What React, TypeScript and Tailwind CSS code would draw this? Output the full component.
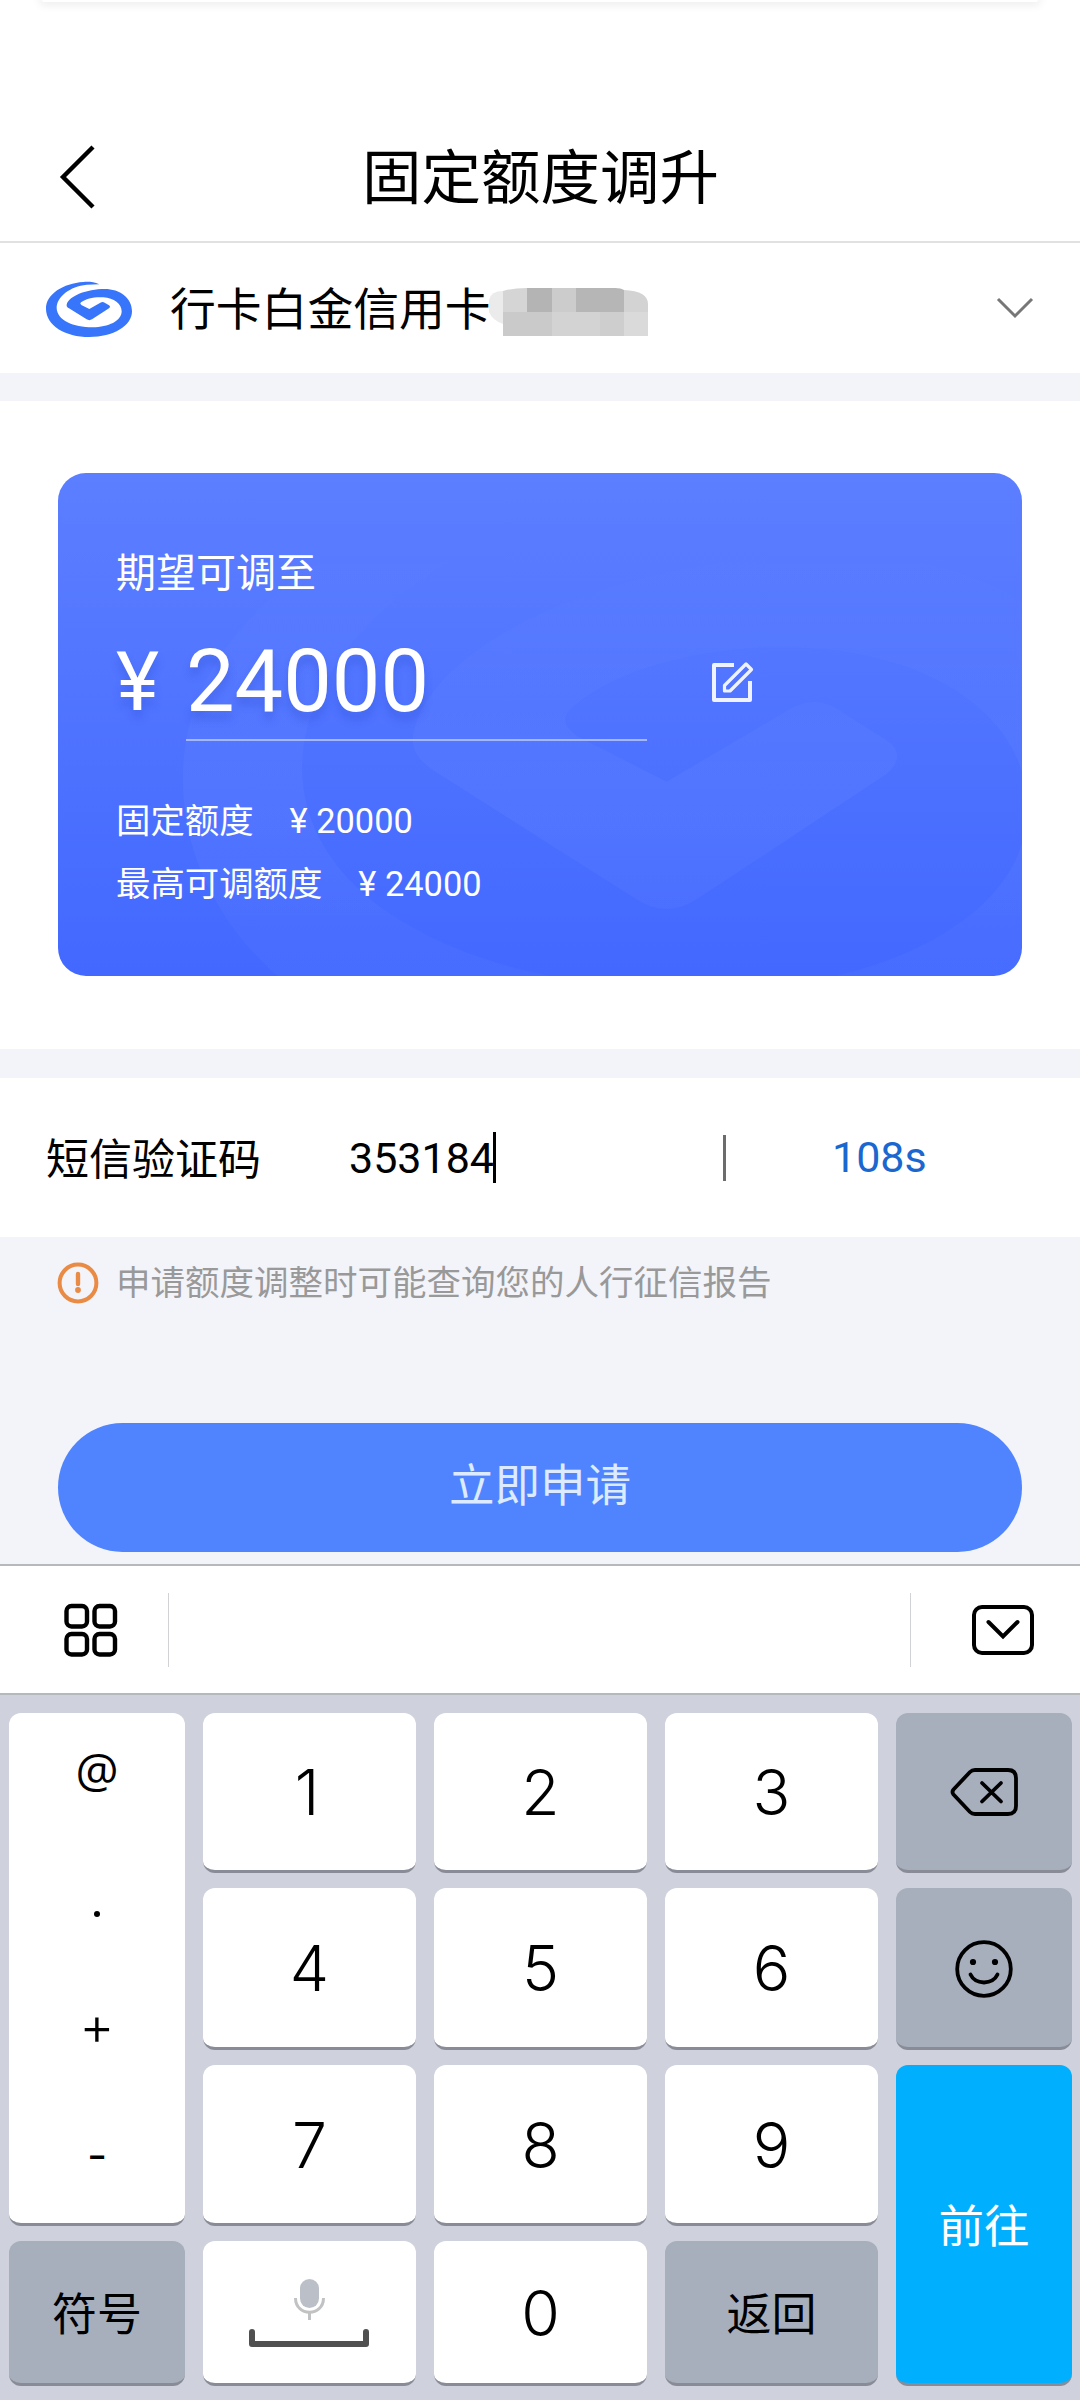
import React, { useState } from 'react';

const swirl =
  'M178 37 C160 29 145 29 130 30 C70 34 18 66 18 110 C18 160 75 195 148 195 C220 195 276 162 276 118 C276 78 240 51 194 51 C140 51 86 72 80 98 C79 103 82 106 87 109 L140 142 Q148 147 156 142 L207 109 Q213 104 207 100 L194 92 Q188 88 181 92 L148 111 L124 99 Q118 95 123 91 C138 79 165 74 190 76 C222 79 245 95 245 118 C245 147 205 166 158 166 C100 166 51 145 50 108 C50 74 90 43 140 38 Z';

const BankLogo = () => (
  <svg className="w-[100px] h-[75px]" viewBox="0 0 300 225">
    <path d={swirl} fill="#3775fb" />
  </svg>
);

const CardWatermark = () => (
  <svg className="absolute inset-0 w-full h-full" viewBox="0 0 964 503">
    <defs>
      <linearGradient id="fade" x1="0" y1="0" x2="0" y2="1">
        <stop offset="0.1" stopColor="#fff" stopOpacity="0" />
        <stop offset="0.55" stopColor="#fff" stopOpacity="0.04" />
        <stop offset="1" stopColor="#fff" stopOpacity="0.01" />
      </linearGradient>
    </defs>
    <path d={swirl} fill="url(#fade)" transform="translate(58 -113) scale(3.72 3.8)" />
  </svg>
);

const Mosaic = () => (
  <svg className="w-[164px] h-[60px]" viewBox="0 0 164 60">
    <path d="M0 22 Q2 13 14 13 V46 Q3 42 0 34 Z" fill="#ebebeb" />
    <path d="M14 34 V13 Q24 10 38 10 V34 Z" fill="#d5d5d5" />
    <rect x="38" y="10" width="25" height="24" fill="#b4b4b4" />
    <rect x="63" y="10" width="24" height="24" fill="#cccccc" />
    <path d="M87 10 H126 Q132 10 135 12 V34 H87 Z" fill="#b6b6b6" />
    <path d="M135 12 Q159 13 159 26 V34 H135 Z" fill="#d3d3d3" />
    <rect x="14" y="34" width="49" height="24" fill="#cacaca" />
    <rect x="63" y="34" width="48" height="24" fill="#d3d3d3" />
    <rect x="111" y="34" width="24" height="24" fill="#cecece" />
    <rect x="135" y="34" width="24" height="24" fill="#dadada" />
  </svg>
);

const Header = () => (
  <div className="h-[243px] border-b-2 border-[#e1e1e1] bg-white">
    <div className="h-[2px] mx-[42px] rounded-b-lg bg-white shadow-[0_0_8px_3px_#ececec]" />
    <div className="mt-[102px] h-[146px] flex items-center">
      <svg className="ml-[56px] w-[44px] h-[68px]" viewBox="0 0 44 68">
        <path d="M37 4 L7 34 L37 64" fill="none" stroke="#000" strokeWidth="4.4" />
      </svg>
      <div className="flex-1 text-center pt-[4px] pr-[99px] text-[59.5px] leading-[70px]">固定额度调升</div>
    </div>
  </div>
);

const CardSelect = () => (
  <div className="h-[130px] flex items-center bg-white">
    <div className="ml-[40px] pt-[2px]">
      <BankLogo />
    </div>
    <span className="ml-[30px] pt-[7px] text-[45.8px] w-[319px] whitespace-nowrap">行卡白金信用卡</span>
    <Mosaic />
    <svg className="ml-auto mr-[44px] w-[42px] h-[28px]" viewBox="0 0 42 28">
      <path d="M4 5 L21 22 L38 5" fill="none" stroke="#777" strokeWidth="3" />
    </svg>
  </div>
);

const LimitCard = () => (
  <div className="relative h-[503px] rounded-[28px] overflow-hidden bg-linear-to-b from-[#5c7eff] to-[#4268ff] text-white px-[58px]">
    <CardWatermark />
    <div className="relative">
      <div className="pt-[72px] text-[40px] leading-[58px]">期望可调至</div>
      <div className="flex items-center h-[100px] mt-[29px] [text-shadow:0_8px_9px_rgba(40,70,200,0.3)]">
        <span className="w-[70px] text-[82px] leading-[100px]">¥</span>
        <span className="w-[461px] text-[86.5px] leading-[100px]">24000</span>
        <svg className="ml-[63px] w-[44px] h-[44px]" viewBox="0 0 44 44" fill="none" stroke="#eef3ff" strokeWidth="4" strokeLinejoin="round">
          <path d="M24 5 H4 V40 H40 V21" />
          <path d="M36 4 L41.5 9.5 L20 31 H14.5 V25.5 Z" strokeWidth="3.2" />
        </svg>
      </div>
      <div className="ml-[70px] mt-[7px] w-[461px] h-[2px] bg-[#a5b8ff]" />
      <div className="mt-[49px] text-[34.4px] leading-[63px] flex gap-[36px]">
        <span>固定额度</span>
        <span>¥ 20000</span>
      </div>
      <div className="text-[34.4px] leading-[63px] flex gap-[36px]">
        <span>最高可调额度</span>
        <span>¥ 24000</span>
      </div>
    </div>
  </div>
);

const SmsCode = () => {
  const [code] = useState('353184');

  return (
    <div className="h-[159px] flex items-center bg-white">
      <span className="ml-[46px] pt-[6px] w-[303px] text-[43px]">短信验证码</span>
      <span className="pt-[2px] text-[43px] w-[144px]">{code}</span>
      <span className="w-[3px] h-[51px] bg-black" />
      <span className="ml-[227px] w-[3px] h-[46px] bg-[#6c6c6c]" />
      <span className="ml-[106px] text-[43px] text-[#1967cf]">108s</span>
    </div>
  );
};

const Notice = () => (
  <div className="mt-[25px] h-[42px] flex items-center">
    <svg className="ml-[57px] w-[42px] h-[42px]" viewBox="0 0 42 42">
      <circle cx="21" cy="21" r="18.4" fill="none" stroke="#e98a45" strokeWidth="4" />
      <path d="M21 12 V22" stroke="#e98a45" strokeWidth="4.4" strokeLinecap="round" />
      <circle cx="21" cy="28" r="2.9" fill="#e98a45" />
    </svg>
    <span className="ml-[17px] text-[34.5px] leading-[42px] text-[#999]">申请额度调整时可能查询您的人行征信报告</span>
  </div>
);

const Toolbar = () => (
  <div className="h-[131px] flex items-center bg-white border-y-2 border-[#b6b9bc]">
    <svg className="ml-[63px] mt-[3px] w-[56px] h-[56px]" viewBox="0 0 56 56" fill="none" stroke="#000" strokeWidth="4.4">
      <rect x="3.5" y="3" width="20.5" height="20.5" rx="5" />
      <rect x="31.5" y="3" width="20.5" height="20.5" rx="5" />
      <rect x="3.5" y="31" width="20.5" height="20.5" rx="5" />
      <rect x="31.5" y="31" width="20.5" height="20.5" rx="5" />
    </svg>
    <div className="ml-[49px] w-px h-[74px] bg-[#d0d2d5]" />
    <div className="ml-[741px] w-px h-[74px] bg-[#d0d2d5]" />
    <svg className="ml-[60px] w-[64px] h-[52px]" viewBox="0 0 64 52" fill="none" stroke="#000" strokeWidth="4">
      <rect x="3" y="3" width="58" height="46" rx="8" />
      <path d="M17.5 18 L32 32.5 L46.5 18" strokeLinecap="round" />
    </svg>
  </div>
);

type KeyProps = {
  className?: string;
  children: React.ReactNode;
};

const Key = ({ className = 'bg-white', children }: KeyProps) => (
  <button className={`flex items-center justify-center rounded-[12px] border-b-[3px] border-[#898c97] ${className}`}>
    {children}
  </button>
);

const Digit = ({ value }: { value: string }) => (
  <Key>
    <span className="pt-[2px] font-['Inter'] font-[350] text-[62.5px] leading-none">{value}</span>
  </Key>
);

const Keyboard = () => (
  <div className="h-[705px] pt-[18px] pl-[9px] bg-[#cfd2dc] grid grid-cols-[176px_213px_213px_213px_176px] grid-rows-[160px_162px_161px_145px] gap-x-[18px] gap-y-[15px]">
    <button className="row-span-3 flex flex-col items-center rounded-[12px] border-b-[3px] border-[#898c97] bg-white text-[44px]">
      <span className="mt-[27px] h-[60px] leading-[60px] font-['Open_Sans'] text-[48px]">@</span>
      <span className="mt-[111px] w-[6px] h-[6px] rounded-full bg-black" />
      <span className="mt-[79px] h-[60px] leading-[60px] font-['Inter'] font-[350] text-[54px]">+</span>
      <span className="mt-[69px] h-[60px] leading-[60px] font-['Inter']">-</span>
    </button>
    <Key>
      <span className="pt-[2px] mr-[5px] font-['Inter'] font-[350] text-[62.5px] leading-none">1</span>
    </Key>
    <Digit value="2" />
    <Digit value="3" />
    <Key className="bg-[#a7afbd]">
      <svg className="w-[68px] h-[50px]" viewBox="0 0 68 50" fill="none" stroke="#000" strokeWidth="3.8" strokeLinejoin="round" strokeLinecap="round">
        <path d="M25 3 H58 Q66 3 66 11 V39 Q66 47 58 47 H25 Q22 47 20 45 L3.5 27.5 Q1.5 25 3.5 22.5 L20 5 Q22 3 25 3 Z" />
        <path d="M32 16 L51 34.5 M51 16 L32 34.5" />
      </svg>
    </Key>

    <Digit value="4" />
    <Digit value="5" />
    <Digit value="6" />
    <Key className="bg-[#a7afbd]">
      <svg className="mt-[2px] w-[60px] h-[60px]" viewBox="0 0 60 60">
        <circle cx="30" cy="30" r="26.8" fill="none" stroke="#000" strokeWidth="3.8" />
        <circle cx="19" cy="23" r="3.1" />
        <circle cx="41" cy="23" r="3.1" />
        <path d="M16.5 35.5 Q20 43 30 43.5 Q40 43 43.5 35.5" fill="none" stroke="#000" strokeWidth="3.8" strokeLinecap="round" />
      </svg>
    </Key>

    <Digit value="7" />
    <Digit value="8" />
    <Digit value="9" />
    <Key className="row-span-2 bg-[#00b0ff] text-white border-[#078fca]">
      <span className="pt-[8px] text-[45.5px]">前往</span>
    </Key>

    <Key className="bg-[#a7afbd]">
      <span className="pt-[7px] text-[45px]">符号</span>
    </Key>
    <Key>
      <svg className="mr-[2px] w-[124px] h-[72px]" viewBox="0 0 124 72" fill="none">
        <rect x="53" y="3" width="19" height="29" rx="9.5" fill="#bbc0c8" />
        <path d="M48.5 22 C48.5 41 76.5 41 76.5 22" stroke="#c0c2c4" strokeWidth="3" />
        <path d="M62.5 36 V44" stroke="#c0c2c4" strokeWidth="3" />
        <path d="M5 56 V68 H119 V56" stroke="#505050" strokeWidth="6" strokeLinecap="round" strokeLinejoin="round" />
      </svg>
    </Key>
    <Digit value="0" />
    <Key className="bg-[#a7afbd]">
      <span className="pt-[7px] text-[45px]">返回</span>
    </Key>
  </div>
);

const App = () => {
  return (
    <div className="w-[1080px] h-[2400px] overflow-hidden bg-[#f3f4f9] text-black font-[Roboto,'Noto_Sans_CJK_SC',sans-serif]">
      <Header />
      <CardSelect />
      <div className="mt-[28px] h-[648px] bg-white px-[58px] pt-[72px]">
        <LimitCard />
      </div>
      <div className="h-[29px]" />
      <SmsCode />
      <Notice />
      <button className="block mt-[119px] mb-[12px] mx-[58px] w-[964px] h-[129px] rounded-full bg-[#5084fe] text-[#dcebff] text-[45.5px]">
        立即申请
      </button>
      <Toolbar />
      <Keyboard />
    </div>
  );
};

export default App;
